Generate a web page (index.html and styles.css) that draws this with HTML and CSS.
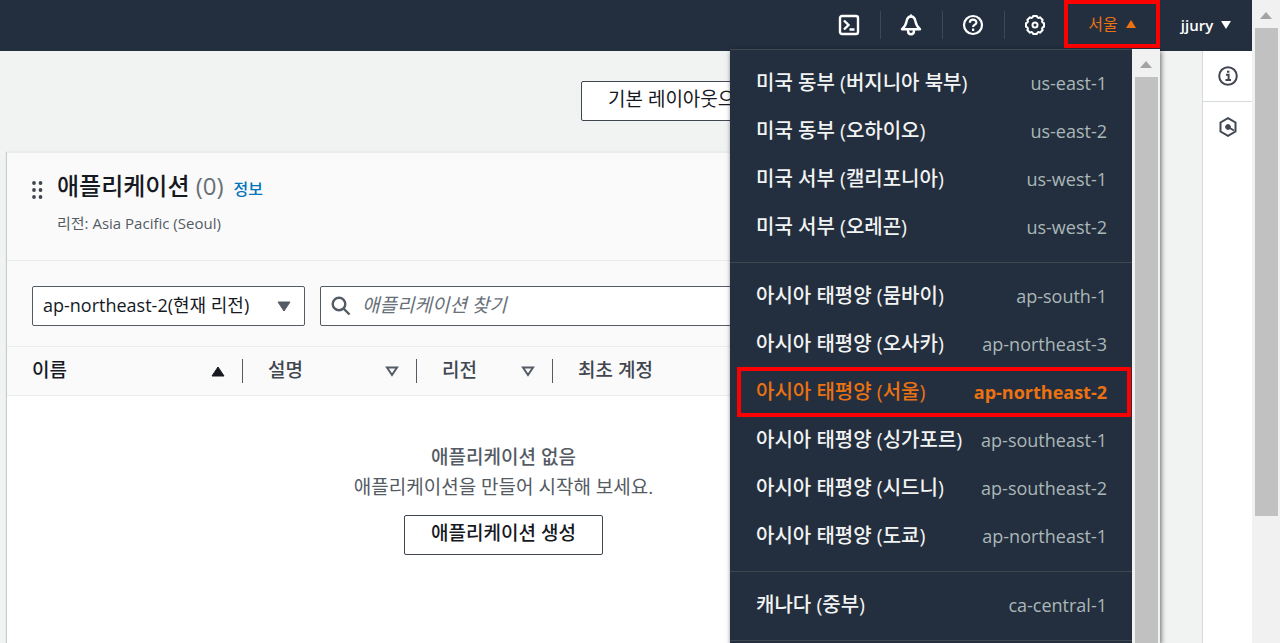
FILE: index.html
```
<!DOCTYPE html>
<html lang="ko">
<head>
    <meta charset="utf-8">
    <title>AWS Console Home</title>
    <link rel="stylesheet" href="styles.css">
</head>
<body>
    <div class="app">
        <header class="nav">
            <button class="nav-icon" aria-label="CloudShell">
                <svg width="22" height="22" viewBox="0 0 22 22" fill="none" stroke="#fff" stroke-width="2.4">
                    <rect x="2" y="2" width="18" height="18" rx="2"/>
                    <path d="M6 6.500l4.500 4.500L6 15.500M11.500 15.500h5"/>
                </svg>
            </button>
            <button class="nav-icon" aria-label="알림">
                <svg width="22" height="22" viewBox="0 0 22 22" fill="none" stroke="#fff" stroke-width="2.4" stroke-linejoin="round" stroke-linecap="round">
                    <path d="M11 2.500C8 2.500 7 4.800 6.500 7.500 5.900 10.800 5 12.800 2 15.200h18c-3-2.400-3.900-4.400-4.500-7.700C15 4.800 14 2.500 11 2.500z"/>
                    <path d="M11 1.500v1M8 16.500c0 5 6 5 6 0"/>
                </svg>
            </button>
            <button class="nav-icon" aria-label="지원">
                <svg width="22" height="22" viewBox="0 0 22 22" fill="none" stroke="#fff" stroke-width="2.2">
                    <circle cx="11" cy="11" r="9"/>
                    <path d="M7.800 8.800c0-4.300 6.600-4.100 6.600-.4 0 2.400-3.300 2.200-3.300 4.700M11.100 14.600v2.400"/>
                </svg>
            </button>
            <button class="nav-icon" aria-label="설정">
                <svg width="22" height="22" viewBox="0 0 22 22" fill="none" stroke="#fff" stroke-width="2" stroke-linejoin="round">
                    <path d="M20 12.900L18.600 13.400 18 14.800 18.700 16 16 18.700 14.800 18 13.400 18.600 12.900 20 9.100 20 8.600 18.600 7.200 18 6 18.700 3.300 16 4 14.800 3.400 13.400 2 12.900 2 9.100 3.400 8.600 4 7.200 3.300 6 6 3.300 7.200 4 8.600 3.400 9.100 2 12.900 2 13.400 3.400 14.800 4 16 3.300 18.700 6 18 7.200 18.600 8.600 20 9.100z"/>
                    <circle cx="11" cy="11" r="2.500"/>
                </svg>
            </button>
            <div class="region">
                <button class="region-toggle" aria-expanded="true">
                    서울
                    <svg width="10" height="8" viewBox="0 0 10 8"><path d="M5 0l5 8H0z" fill="#ec7211"/></svg>
                </button>
                <div class="region-menu">
                    <div class="region-list">
                        <ul>
                            <li><a href="#"><span>미국 동부 (버지니아 북부)</span><span class="code">us-east-1</span></a></li>
                            <li><a href="#"><span>미국 동부 (오하이오)</span><span class="code">us-east-2</span></a></li>
                            <li><a href="#"><span>미국 서부 (캘리포니아)</span><span class="code">us-west-1</span></a></li>
                            <li><a href="#"><span>미국 서부 (오레곤)</span><span class="code">us-west-2</span></a></li>
                        </ul>
                        <ul>
                            <li><a href="#"><span>아시아 태평양 (뭄바이)</span><span class="code">ap-south-1</span></a></li>
                            <li><a href="#"><span>아시아 태평양 (오사카)</span><span class="code">ap-northeast-3</span></a></li>
                            <li class="current"><a href="#"><span>아시아 태평양 (서울)</span><span class="code">ap-northeast-2</span></a></li>
                            <li><a href="#"><span>아시아 태평양 (싱가포르)</span><span class="code">ap-southeast-1</span></a></li>
                            <li><a href="#"><span>아시아 태평양 (시드니)</span><span class="code">ap-southeast-2</span></a></li>
                            <li><a href="#"><span>아시아 태평양 (도쿄)</span><span class="code">ap-northeast-1</span></a></li>
                        </ul>
                        <ul>
                            <li><a href="#"><span>캐나다 (중부)</span><span class="code">ca-central-1</span></a></li>
                        </ul>
                    </div>
                    <div class="scrollbar menu-scrollbar">
                        <svg width="12" height="7" viewBox="0 0 12 7"><path d="M6 0l6 7H0z" fill="#a3a3a3"/></svg>
                        <div class="thumb"></div>
                    </div>
                </div>
            </div>
            <button class="user">
                jjury
                <svg width="10" height="8" viewBox="0 0 10 8"><path d="M0 0h10L5 8z" fill="#fff"/></svg>
            </button>
        </header>

        <div class="page">
            <main>
                <div class="toolbar">
                    <button class="btn btn-reset">기본 레이아웃으로 재설정</button>
                </div>

                <section class="panel">
                    <div class="panel-header">
                        <svg class="drag" width="11" height="18" viewBox="0 0 11 18" fill="#414750">
                            <circle cx="2" cy="2" r="1.900"/><circle cx="8.500" cy="2" r="1.900"/>
                            <circle cx="2" cy="9" r="1.900"/><circle cx="8.500" cy="9" r="1.900"/>
                            <circle cx="2" cy="16" r="1.900"/><circle cx="8.500" cy="16" r="1.900"/>
                        </svg>
                        <div>
                            <div class="title">
                                <h2>애플리케이션 <span class="count">(0)</span></h2>
                                <a href="#">정보</a>
                            </div>
                            <p class="subtitle">리전: Asia Pacific (Seoul)</p>
                        </div>
                    </div>

                    <div class="filters">
                        <div class="select">
                            <select aria-label="리전">
                                <option>ap-northeast-2(현재 리전)</option>
                            </select>
                            <svg width="14" height="11" viewBox="0 0 14 11"><path d="M1 1h12L7 10z" fill="#545b64" stroke="#545b64" stroke-linejoin="round"/></svg>
                        </div>
                        <label class="search">
                            <svg width="20" height="20" viewBox="0 0 20 20" fill="none" stroke="#545b64" stroke-width="2.400">
                                <circle cx="8" cy="8" r="6.300"/><path d="M12.500 12.500l6 6"/>
                            </svg>
                            <input type="text" placeholder="애플리케이션 찾기" aria-label="애플리케이션 찾기">
                        </label>
                    </div>

                    <table>
                        <thead>
                            <tr>
                                <th class="col-name sorted"><div><span>이름</span> <svg width="14" height="11" viewBox="0 0 14 11"><path d="M7 1l6 9H1z" fill="#16191f" stroke="#16191f" stroke-linejoin="round"/></svg></div></th>
                                <th class="col-desc"><div><span>설명</span> <svg width="14" height="11" viewBox="0 0 14 11"><path d="M2 1.500h10L7 9z" fill="none" stroke="#545b64" stroke-width="2"/></svg></div></th>
                                <th class="col-region"><div><span>리전</span> <svg width="14" height="11" viewBox="0 0 14 11"><path d="M2 1.500h10L7 9z" fill="none" stroke="#545b64" stroke-width="2"/></svg></div></th>
                                <th><div><span>최초 계정</span></div></th>
                            </tr>
                        </thead>
                        <tbody>
                            <tr>
                                <td colspan="4">
                                    <b>애플리케이션 없음</b>
                                    <p>애플리케이션을 만들어 시작해 보세요.</p>
                                    <button class="btn">애플리케이션 생성</button>
                                </td>
                            </tr>
                        </tbody>
                    </table>
                </section>
            </main>

            <aside class="tools">
                <button aria-label="정보">
                    <svg width="20" height="20" viewBox="0 0 20 20" fill="none" stroke="#414750" stroke-width="2">
                        <circle cx="10" cy="10" r="8.800"/>
                        <path d="M8 8.800h2.600v5M7.500 14h5.500M9 5.800h2.400" />
                    </svg>
                </button>
                <button aria-label="도구">
                    <svg width="20" height="20" viewBox="0 0 20 20" fill="none" stroke="#414750" stroke-width="2">
                        <path d="M10 1.200l7.500 4.300v9L10 18.800l-7.500-4.300v-9z"/>
                        <circle cx="10" cy="10" r="2.400" fill="#414750" stroke-width="1"/>
                        <path d="M10 10l6 3.500"/>
                    </svg>
                </button>
            </aside>
        </div>
    </div>

    <div class="scrollbar page-scrollbar">
        <svg width="12" height="7" viewBox="0 0 12 7"><path d="M6 0l6 7H0z" fill="#a3a3a3"/></svg>
        <div class="thumb"></div>
    </div>
</body>
</html>
```

FILE: styles.css
```
* { box-sizing: border-box; }
body {
    margin: 0;
    height: 100vh;
    display: flex;
    overflow: hidden;
    font-family: "Open Sans", "Noto Sans CJK KR", sans-serif;
    font-size: 19px;
    line-height: 24px;
    color: #16191f;
    background: #f1f3f3;
}
button, input, select { font: inherit; color: inherit; }
button { cursor: pointer; }
svg { flex: none; }
h2, p, ul { margin: 0; padding: 0; }
a { color: #0073bb; text-decoration: none; }

.app {
    flex: 1;
    min-width: 0;
    display: flex;
    flex-direction: column;
}

/* top navigation */
.nav {
    display: flex;
    justify-content: flex-end;
    height: 51px;
    background: #232f3e;
    color: #fff;
}
.nav button {
    display: flex;
    align-items: center;
    justify-content: center;
    padding: 0;
    border: none;
    background: none;
}
.nav .nav-icon {
    position: relative;
    width: 62px;
    height: 50px;
}
.nav-icon + .nav-icon::before {
    content: "";
    position: absolute;
    left: 0;
    top: 11px;
    bottom: 11px;
    border-left: 1px solid #414750;
}
.region {
    position: relative;
    margin-left: -2px;
}
.nav .region-toggle {
    width: 96px;
    height: 48px;
    gap: 8px;
    border: 4px solid #f00;
    color: #ec7211;
    font-size: 16px;
}
.nav .user {
    width: 92px;
    height: 50px;
    gap: 8px;
    font-size: 15px;
    font-weight: 600;
}

/* region menu */
.region-menu {
    position: absolute;
    z-index: 1;
    top: 49px;
    right: 0;
    width: 430px;
    height: calc(100vh - 49px);
    display: flex;
    background: #232f3e;
    box-shadow: 1px 2px 5px rgba(0,0,0,0.6);
}
.region-list {
    flex: 1;
    border-top: 1px solid #414750;
    overflow: hidden;
}
.region-list ul {
    list-style: none;
    padding: 9px 0 11px;
    border-bottom: 1px solid #414750;
}
.region-list a {
    display: flex;
    align-items: center;
    justify-content: space-between;
    height: 48px;
    padding: 0 25px 0 26px;
    color: #f2f3f3;
    font-size: 20px;
    font-weight: 500;
    white-space: nowrap;
}
.region-list .code {
    color: #aab7b8;
    font-size: 18px;
}
.region-list .current {
    margin: 0 2px 0 8px;
    outline: 4px solid #f00;
    outline-offset: -3px;
}
.region-list .current a {
    padding: 0 23px 0 18px;
    color: #ec7211;
}
.region-list .current .code { color: #ec7211; font-weight: 700; }

/* scrollbars */
.scrollbar {
    width: 28px;
    display: flex;
    flex-direction: column;
    align-items: center;
    background: #f1f1f1;
}
.scrollbar svg { margin: 12px 0 9px; }
.thumb {
    width: 23px;
    height: 488px;
    background: #c1c1c1;
}
.menu-scrollbar .thumb { flex: 1; }

/* page */
.page {
    flex: 1;
    min-height: 0;
    display: flex;
}
main {
    flex: 1;
    display: flex;
    flex-direction: column;
    padding: 30px 202px 0 7px;
}
.toolbar {
    display: flex;
    justify-content: flex-end;
    padding: 0 165px 31px 0;
}
.btn {
    height: 40px;
    padding: 0 26px 4px;
    border: 1px solid #414750;
    border-radius: 2px;
    background: #fff;
    color: #16191f;
    font-weight: 500;
    white-space: nowrap;
}
.btn-reset { width: 254px; font-weight: 400; }

.panel {
    flex: 1;
    background: #fff;
    border-top: 1px solid #eaeded;
    box-shadow: -1px 0 1px #c4cccc;
}
.panel-header {
    display: flex;
    gap: 14px;
    height: 108px;
    padding: 17px 25px;
    border-bottom: 1px solid #eaeded;
    background: #fafafa;
}
.drag { margin-top: 11px; }
.title {
    display: flex;
    align-items: baseline;
    gap: 10px;
    height: 32px;
}
.title h2 { font-size: 24px; font-weight: 500; line-height: 32px; }
.count { font-weight: 400; color: #687078; }
.title a { font-size: 16px; font-weight: 500; }
.subtitle {
    margin-top: 9px;
    font-size: 15px;
    color: #545b64;
}
.filters {
    display: flex;
    gap: 15px;
    padding: 25px 25px 20px;
    background: #fafafa;
}
.select {
    position: relative;
    width: 273px;
}
.select select {
    appearance: none;
    width: 100%;
    height: 40px;
    padding: 0 40px 2px 10px;
    border: 1px solid #545b64;
    border-radius: 2px;
    background: #fff;
    font-size: 18px;
}
.select svg {
    position: absolute;
    right: 14px;
    top: 15px;
    pointer-events: none;
}
.search {
    flex: 1;
    display: flex;
    align-items: center;
    gap: 11px;
    height: 40px;
    padding: 0 10px;
    border: 1px solid #545b64;
    border-radius: 2px;
    background: #fff;
}
.search input {
    flex: 1;
    padding: 0 0 2px;
    border: none;
    outline: none;
    background: none;
}
.search input::placeholder { color: #687078; font-style: italic; }

table {
    width: 100%;
    table-layout: fixed;
    border-collapse: collapse;
}
th {
    height: 49px;
    padding: 0;
    border: 1px solid #eaeded;
    border-width: 1px 0;
    background: #fafafa;
    color: #414750;
    font-weight: 500;
}
th div {
    display: flex;
    align-items: center;
    justify-content: space-between;
    height: 24px;
    padding: 0 17px 0 25px;
}
th span { padding-bottom: 2px; }
th + th div { border-left: 1px solid #545b64; }
.sorted { color: #16191f; }
.col-name { width: 235px; }
.col-desc { width: 174px; }
.col-region { width: 136px; }
td {
    padding: 49px 20px 0;
    text-align: center;
    color: #545b64;
}
td b { font-weight: 500; }
td p { margin: 6px 0 16px; }

/* right side tools */
.tools {
    width: 50px;
    border-left: 1px solid #d5dbdb;
    background: #fff;
}
.tools button {
    display: flex;
    align-items: center;
    justify-content: center;
    width: 100%;
    height: 50px;
    padding: 0;
    border: none;
    background: none;
}
.tools button + button { border-top: 1px solid #d5dbdb; }
```
